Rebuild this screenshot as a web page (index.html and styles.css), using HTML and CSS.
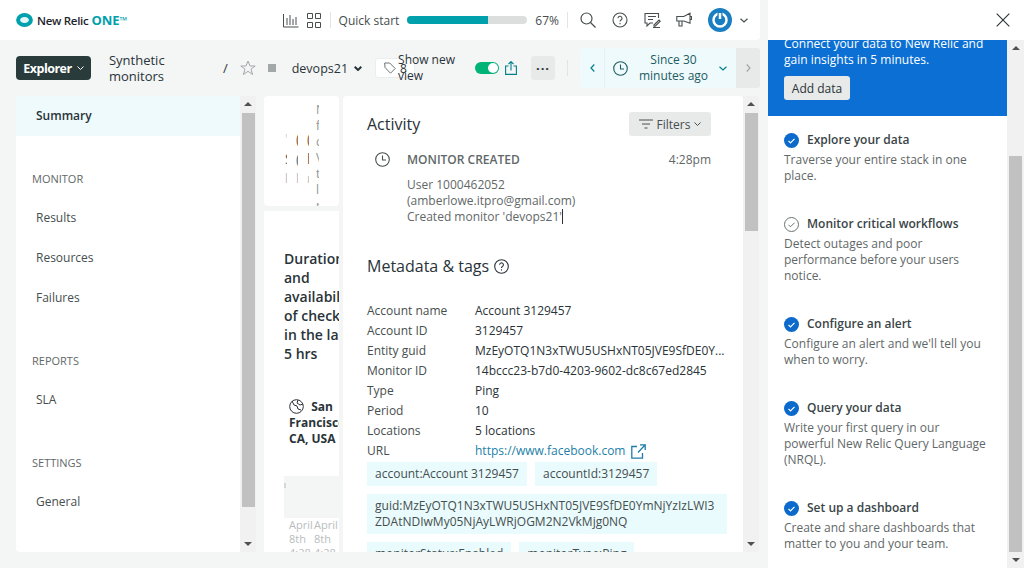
FILE: index.html
```html
<!DOCTYPE html>
<html lang="en">
<head>
  <meta charset="UTF-8" />
  <title>devops21 - New Relic One</title>
  <link rel="stylesheet" href="styles.css">
</head>
<body>
  <div class="app">
    <div class="main">
      <!-- top nav -->
      <header class="topbar">
        <div class="logo">
          <svg width="17" height="14" viewBox="0 0 17 14"><ellipse cx="8.5" cy="7" rx="6.400" ry="5" fill="#e4f6f7" stroke="#00a0ad" stroke-width="4"/></svg>
          <span class="logo-name">New Relic</span> <span class="logo-one">ONE</span><span class="logo-tm">™</span>
        </div>
        <div class="topbar-right">
          <svg class="ico" width="16" height="15" viewBox="0 0 16 15" fill="none" stroke="#464e4e"><path d="M.5 1v13h15M4 5v7M7 2v10M10 6v6M13 4v8"/></svg>
          <svg class="ico" width="16" height="15" viewBox="0 0 16 15" fill="none" stroke="#464e4e"><path d="M1.500.5h5v5h-5zM9.500.5h5v5h-5zM1.500 9.500h5v5h-5zM9.500 9.500h5v5h-5z"/></svg>
          <span class="vline"></span>
          <span class="qs">Quick start</span>
          <span class="progress"><span class="progress-fill"></span></span>
          <span class="qs pct">67%</span>
          <span class="vline"></span>
          <svg class="ico search" width="16" height="16" viewBox="0 0 16 16" fill="none" stroke="#464e4e" stroke-width="1.200"><circle cx="6.500" cy="6.500" r="5.500"/><path d="M10.500 10.500l5 5"/></svg>
          <svg class="ico" width="16" height="16" viewBox="0 0 16 16" fill="none" stroke="#464e4e" stroke-width="1.100"><circle cx="8" cy="8" r="7"/><path d="M6 6.300a2 2 0 1 1 3 1.700c-.7.400-1 .8-1 1.600M8 11v1.200"/></svg>
          <svg class="ico feedback" width="17" height="16" viewBox="0 0 17 16" fill="none" stroke="#464e4e" stroke-width="1.100"><path d="M14.500 6V1.500H1v9.500h2v3l3-3h3M4 4.500h8M4 7.500h5M10 13l5-5 1.200 1.200-5 5H10zM9 15.500h7"/></svg>
          <svg class="ico" width="16" height="16" viewBox="0 0 16 16" fill="none" stroke="#464e4e" stroke-width="1.100"><path d="M.8 4.500h7L14 1.200v10L7.800 9H.8zM3 9v5h3V9M14.500 4.500h1v3h-1"/></svg>
          <svg class="avatar" width="24" height="24" viewBox="0 0 24 24"><circle cx="12" cy="12" r="12" fill="#1a7ec2"/><circle cx="12" cy="12" r="6.500" fill="none" stroke="#fff" stroke-width="2.500"/><path d="M12 3.500v8" stroke="#1a7ec2" stroke-width="5"/><path d="M12 5v6" stroke="#fff" stroke-width="2.500"/></svg>
          <svg class="ico caret" width="8" height="5" viewBox="0 0 8 5" fill="none" stroke="#464e4e" stroke-width="1.200"><path d="M.5.700L4 4 7.500.700"/></svg>
        </div>
      </header>

      <!-- entity header -->
      <div class="subbar">
        <button class="explorer">Explorer <svg width="7" height="4" viewBox="0 0 7 4" fill="none" stroke="#fff"><path d="M.5.500L3.500 3.500 6.500.500"/></svg></button>
        <div class="crumb">Synthetic monitors</div>
        <span class="slash">/</span>
        <svg class="star" width="16" height="16" viewBox="0 0 16 16" fill="none" stroke="#a2a8a8"><path d="M8 1l2 5h5.200l-4.200 3.200 1.600 5.300L8 11.300l-4.600 3.200L5 9.200.8 6H6z"/></svg>
        <span class="status"></span>
        <span class="entity">devops21</span>
        <svg class="entity-caret" width="8" height="5" viewBox="0 0 8 5" fill="none" stroke="#293338" stroke-width="2"><path d="M.7.700L4 4 7.300.700"/></svg>
        <span class="tagbox">
          <svg width="12" height="12" viewBox="0 0 12 12" fill="none" stroke="#6b7373"><path d="M.7 1h5l5.500 5.500-4.700 4.700L1 5.500z"/></svg>
          <span class="tagcount">8</span>
          <span class="newview">Show new view</span>
        </span>
        <span class="toggle"><span class="knob"></span></span>
        <svg class="share" width="12" height="14" viewBox="0 0 12 14" fill="none" stroke="#00808c" stroke-width="1.100"><path d="M3.500 5H.6v8.400h10.800V5H8.500M6 9.500V.8M3.500 3L6 .6 8.500 3"/></svg>
        <button class="more">···</button>
        <span class="vline tall"></span>
        <div class="timepicker">
          <span class="tp-side"><svg width="5" height="8" viewBox="0 0 5 8" fill="none" stroke="#00808c" stroke-width="1.200"><path d="M4.300.500L1 4l3.300 3.500"/></svg></span>
          <span class="tp-mid">
            <svg width="15" height="15" viewBox="0 0 15 15" fill="none" stroke="#1d5c62" stroke-width="1.100"><circle cx="7.500" cy="7.500" r="6.800"/><path d="M7.500 3.500v4.500h3.500"/></svg>
            <span class="tp-text">Since 30 minutes ago</span>
            <svg width="8" height="5" viewBox="0 0 8 5" fill="none" stroke="#00808c" stroke-width="1.200"><path d="M.5.700L4 4 7.500.700"/></svg>
          </span>
          <span class="tp-next"><svg width="5" height="8" viewBox="0 0 5 8" fill="none" stroke="#a2a8a8" stroke-width="1.200"><path d="M.7.500L4 4 .7 7.500"/></svg></span>
        </div>
      </div>

      <div class="content">
        <div class="sidenav-wrap">
          <nav class="sidenav">
            <a class="nav-item active">Summary</a>
            <div class="nav-head">MONITOR</div>
            <a class="nav-item">Results</a>
            <a class="nav-item">Resources</a>
            <a class="nav-item">Failures</a>
            <div class="nav-head">REPORTS</div>
            <a class="nav-item">SLA</a>
            <div class="nav-head">SETTINGS</div>
            <a class="nav-item">General</a>
          </nav>
          <div class="scrollbar"><span class="arrow up"></span><span class="thumb thumb-nav"></span><span class="arrow down"></span></div>
        </div>

        <div class="middle">
          <div class="mini-card">
            <div class="slit">
              <p class="faint">'</p>
              <p class="dark">S</p>
              <p class="pale">l</p>
            </div>
            <div class="slit">
              <p>(</p>
              <p class="blue">(</p>
              <p class="pale">l</p>
            </div>
            <div class="slit">
              <p>(</p>
              <p class="dark">l</p>
              <p class="pale">r</p>
            </div>
            <div class="slit-text">'<br>N<br>f<br>c<br>V<br>t<br>l<br>r</div>
          </div>
          <div class="chart-card">
            <h3>Duration and availability of checks in the last 5 hrs</h3>
            <div class="loc">
              <svg width="15" height="15" viewBox="0 0 15 15" fill="none" stroke="#293338"><circle cx="7.500" cy="7.500" r="6.800"/><path d="M3 2l2 4 3 1 1 3 3 1M9 1l-1 3 3 2 3-1"/></svg>
              <b>San Francisco, CA, USA</b>
            </div>
            <div class="chart-bar"></div>
            <div class="chart-dates"><span>April 8th 4:28</span><span>April 8th 4:28</span></div>
          </div>
        </div>

        <div class="detail-wrap">
          <section class="detail">
            <div class="activity-head">
              <h2>Activity</h2>
              <button class="filters">
                <svg width="14" height="10" viewBox="0 0 14 10" fill="none" stroke="#464e4e"><path d="M0 1h14M3 5h8M5.500 9h3"/></svg>
                Filters
                <svg width="7" height="4" viewBox="0 0 7 4" fill="none" stroke="#464e4e"><path d="M.5.500l3 3 3-3"/></svg>
              </button>
            </div>
            <div class="event">
              <svg width="15" height="15" viewBox="0 0 15 15" fill="none" stroke="#464e4e" stroke-width="1.100"><circle cx="7.500" cy="7.500" r="6.800"/><path d="M7.500 3.500v4.500h3.500"/></svg>
              <div class="event-body">
                <div class="event-top"><b>MONITOR CREATED</b><span>4:28pm</span></div>
                <p>User 1000462052 (amberlowe.itpro@gmail.com)<br>Created monitor 'devops21'<span class="caret-line"></span></p>
              </div>
            </div>
            <h2 class="meta-title">Metadata &amp; tags
              <svg width="15" height="15" viewBox="0 0 15 15" fill="none" stroke="#293338" stroke-width="1.100"><circle cx="7.500" cy="7.500" r="6.800"/><path d="M5.600 5.800a1.900 1.900 0 1 1 2.900 1.600c-.7.400-1 .7-1 1.500M7.500 10.300v1.100"/></svg>
            </h2>
            <dl class="meta">
              <dt>Account name</dt><dd>Account 3129457</dd>
              <dt>Account ID</dt><dd>3129457</dd>
              <dt>Entity guid</dt><dd>MzEyOTQ1N3xTWU5USHxNT05JVE9SfDE0Y...</dd>
              <dt>Monitor ID</dt><dd>14bccc23-b7d0-4203-9602-dc8c67ed2845</dd>
              <dt>Type</dt><dd>Ping</dd>
              <dt>Period</dt><dd>10</dd>
              <dt>Locations</dt><dd>5 locations</dd>
              <dt>URL</dt><dd><a>https://www.facebook.com</a>
                <svg width="15" height="15" viewBox="0 0 15 15" fill="none" stroke="#1d7fa8" stroke-width="1.300"><path d="M6 2.500H.8v11.700h10.700V9M7 8.500L14 1M9 .8h5.200V6"/></svg></dd>
            </dl>
            <div class="tags">
              <span class="tag">account:Account 3129457</span>
              <span class="tag">accountId:3129457</span>
              <span class="tag wide">guid:MzEyOTQ1N3xTWU5USHxNT05JVE9SfDE0YmNjYzIzLWI3ZDAtNDIwMy05NjAyLWRjOGM2N2VkMjg0NQ</span>
              <span class="tag">monitorStatus:Enabled</span>
              <span class="tag">monitorType:Ping</span>
            </div>
          </section>
          <div class="scrollbar"><span class="arrow up"></span><span class="thumb thumb-detail"></span><span class="arrow down"></span></div>
        </div>
      </div>
    </div>

    <!-- quick start panel -->
    <aside class="panel">
      <div class="panel-top">
        <svg width="14" height="14" viewBox="0 0 14 14" fill="none" stroke="#293338" stroke-width="1.100"><path d="M.7.700l12.600 12.600M13.300.700L.7 13.300"/></svg>
      </div>
      <div class="panel-scroll">
        <div class="panel-body">
          <div class="banner">
            <p>Connect your data to New Relic and gain insights in 5 minutes.</p>
            <button class="add-data">Add data</button>
          </div>
          <div class="step">
            <h4><svg class="check" width="15" height="15" viewBox="0 0 15 15"><circle cx="7.500" cy="7.500" r="7.500" fill="#0b6acb"/><path d="M4.500 7.800l2 2 4-4" fill="none" stroke="#fff" stroke-width="1.200"/></svg>Explore your data</h4>
            <p>Traverse your entire stack in one place.</p>
          </div>
          <div class="step">
            <h4><svg class="check" width="15" height="15" viewBox="0 0 15 15" fill="none" stroke="#6b7373"><circle cx="7.500" cy="7.500" r="7"/><path d="M4.500 7.800l2 2 4-4"/></svg>Monitor critical workflows</h4>
            <p>Detect outages and poor performance before your users notice.</p>
          </div>
          <div class="step">
            <h4><svg class="check" width="15" height="15" viewBox="0 0 15 15"><circle cx="7.500" cy="7.500" r="7.500" fill="#0b6acb"/><path d="M4.500 7.800l2 2 4-4" fill="none" stroke="#fff" stroke-width="1.200"/></svg>Configure an alert</h4>
            <p>Configure an alert and we'll tell you when to worry.</p>
          </div>
          <div class="step">
            <h4><svg class="check" width="15" height="15" viewBox="0 0 15 15"><circle cx="7.500" cy="7.500" r="7.500" fill="#0b6acb"/><path d="M4.500 7.800l2 2 4-4" fill="none" stroke="#fff" stroke-width="1.200"/></svg>Query your data</h4>
            <p>Write your first query in our powerful New Relic Query Language (NRQL).</p>
          </div>
          <div class="step">
            <h4><svg class="check" width="15" height="15" viewBox="0 0 15 15"><circle cx="7.500" cy="7.500" r="7.500" fill="#0b6acb"/><path d="M4.500 7.800l2 2 4-4" fill="none" stroke="#fff" stroke-width="1.200"/></svg>Set up a dashboard</h4>
            <p>Create and share dashboards that matter to you and your team.</p>
          </div>
        </div>
        <div class="scrollbar light"><span class="arrow up"></span><span class="thumb thumb-panel"></span><span class="arrow down"></span></div>
      </div>
    </aside>
  </div>
</body>
</html>
```

FILE: styles.css
```css
* {
  box-sizing: border-box;
}
html, body {
  height: 100%;
}
body {
  margin: 0;
  overflow: hidden;
  background: #f4f5f5;
  color: #293338;
  font-family: "Open Sans", sans-serif;
  font-size: 12px;
}
h2, h3, h4, p, dl, dd {
  margin: 0;
}
button {
  font-family: inherit;
  border: none;
}
svg {
  flex: none;
}
.app {
  display: flex;
  justify-content: space-between;
  height: 568px;
}
.main {
  width: 760px;
  display: flex;
  flex-direction: column;
}

/* top nav */
.topbar {
  height: 40px;
  flex: none;
  background: #fff;
  border-bottom-right-radius: 4px;
  display: flex;
  align-items: center;
  justify-content: space-between;
  padding: 0 12px 0 16px;
}
.logo {
  display: flex;
  align-items: center;
  font-size: 11.5px;
  font-weight: 600;
  color: #1d252c;
  letter-spacing: -0.3px;
}
.logo svg {
  margin-right: 4px;
}
.logo-one {
  color: #00a0ad;
  font-size: 13px;
  font-weight: 700;
  margin-left: 3px;
  letter-spacing: 0;
}
.logo-tm {
  color: #00a0ad;
  font-size: 10px;
}
.topbar-right {
  display: flex;
  align-items: center;
}
.ico {
  margin-right: 7px;
}
.ico + .ico {
  margin-right: 8px;
}
.vline {
  width: 1px;
  height: 16px;
  background: #e3e4e4;
}
.qs {
  font-size: 12px;
  color: #464e4e;
  margin-left: 8px;
}
.progress {
  width: 120px;
  height: 8px;
  border-radius: 4px;
  background: #dcdede;
  margin-left: 8px;
  overflow: hidden;
}
.progress-fill {
  display: block;
  width: 81px;
  height: 8px;
  background: #00a0ad;
}
.pct {
  margin-left: 8px;
  margin-right: 8px;
}
.topbar-right .search {
  margin-left: 12px;
  margin-right: 16px;
}
.topbar-right .ico:nth-of-type(n+4) {
  margin-right: 16px;
}
.topbar-right .ico.feedback {
  margin-right: 15px;
}
.avatar {
  margin-right: 8px;
}
.topbar-right .ico.caret {
  margin-right: 0;
}

/* entity header */
.subbar {
  height: 56px;
  flex: none;
  display: flex;
  align-items: center;
  padding-left: 16px;
  font-size: 13px;
  color: #293338;
}
.explorer {
  width: 75px;
  height: 24px;
  background: #293b3b;
  color: #fff;
  border-radius: 4px;
  font-size: 12.5px;
  font-weight: 700;
  letter-spacing: -0.5px;
  display: flex;
  align-items: center;
  justify-content: center;
  gap: 5px;
  padding: 0;
}
.crumb {
  width: 70px;
  margin-left: 18px;
  margin-top: -1px;
  line-height: 16px;
}
.slash {
  margin-left: 44px;
}
.star {
  margin-left: 12px;
}
.status {
  width: 8px;
  height: 8px;
  background: #a2a8a8;
  margin-left: 12px;
}
.entity {
  margin-left: 16px;
  font-size: 12.5px;
  white-space: nowrap;
}
.entity-caret {
  margin-left: 6px;
}
.tagbox {
  position: relative;
  width: 40px;
  height: 20px;
  margin-left: 13px;
  background: #fff;
  border: 1px solid #eceeee;
  border-radius: 3px;
  display: flex;
  align-items: center;
  padding-left: 8px;
}
.tagcount {
  font-size: 12px;
  margin-left: 4px;
}
.newview {
  position: absolute;
  left: 22px;
  top: -7px;
  width: 70px;
  line-height: 16px;
  font-size: 12px;
}
.toggle {
  width: 24px;
  height: 12px;
  margin-left: 60px;
  border-radius: 6px;
  background: #00b377;
  display: flex;
  align-items: center;
  justify-content: flex-end;
  padding-right: 1px;
}
.knob {
  width: 10px;
  height: 10px;
  border-radius: 50%;
  background: #fff;
}
.share {
  margin-left: 6px;
}
.more {
  width: 24px;
  height: 24px;
  margin-left: 14px;
  background: #e8e9e9;
  border-radius: 3px;
  color: #293338;
  font-size: 13px;
  font-weight: 700;
  letter-spacing: 1px;
  padding: 0;
}
.vline.tall {
  height: 16px;
  margin-left: 12px;
}
.timepicker {
  width: 180px;
  height: 40px;
  margin-left: 12px;
  display: flex;
  border-radius: 3px;
  overflow: hidden;
  background: #eefafc;
  flex: none;
}
.tp-side {
  width: 25px;
  border-right: 1px solid #e3f1f3;
  display: flex;
  align-items: center;
  justify-content: center;
}
.tp-mid {
  flex: 1;
  display: flex;
  align-items: center;
  padding: 0 9px 0 8px;
}
.tp-text {
  flex: 1;
  text-align: center;
  font-size: 12px;
  line-height: 16px;
  color: #1d5c62;
}
.tp-next {
  width: 24px;
  background: #e8e9e9;
  display: flex;
  align-items: center;
  justify-content: center;
}

/* content columns */
.content {
  flex: 1;
  height: 456px;
  display: flex;
  padding-left: 16px;
  margin-bottom: 16px;
  overflow: hidden;
}
.sidenav-wrap {
  width: 240px;
  display: flex;
  flex: none;
}
.sidenav {
  width: 224px;
  background: #fff;
  border-radius: 4px 0 0 4px;
  overflow: hidden;
  font-size: 12px;
}
.nav-item {
  display: flex;
  align-items: center;
  height: 40px;
  padding: 0 0 2px 20px;
  color: #464e4e;
}
.nav-item.active {
  background: #eefafc;
  color: #293338;
  font-weight: 600;
}
.nav-head {
  font-size: 11px;
  color: #5f6868;
  padding-left: 16px;
  margin-top: 35px;
  margin-bottom: 11px;
  line-height: 16px;
}
.scrollbar {
  width: 16px;
  flex: none;
  background: #f1f1f1;
  display: flex;
  flex-direction: column;
  align-items: center;
  position: relative;
}
.arrow {
  flex: none;
  width: 0;
  height: 0;
  border: 4px solid transparent;
}
.arrow.up {
  border-bottom-color: #505050;
  margin-top: 2px;
}
.arrow.down {
  border-top-color: #505050;
  position: absolute;
  bottom: 2px;
}
.thumb {
  width: 13px;
  background: #c1c1c1;
  margin-top: 7px;
}
.thumb-nav {
  height: 394px;
}
.thumb-detail {
  height: 118px;
}
.thumb-panel {
  height: 396px;
  margin-top: 106px;
}

.middle {
  width: 75px;
  margin-left: 8px;
  flex: none;
  display: flex;
  flex-direction: column;
  gap: 5px;
  overflow: hidden;
}
.mini-card {
  height: 110px;
  flex: none;
  background: #fff;
  border-radius: 4px;
  display: flex;
  padding-left: 21px;
  gap: 8px;
  overflow: hidden;
  font-size: 12px;
  line-height: 16px;
  color: #8e9494;
}
.slit {
  width: 2px;
  flex: none;
  margin-right: 1px;
  padding-top: 33px;
  overflow: hidden;
  color: #7d5b3c;
}
.slit p {
  height: 20px;
  line-height: 20px;
  font-size: 14px;
}
.slit .faint {
  color: #d8d4cc;
}
.slit .dark {
  color: #4f5a5e;
}
.slit .blue {
  color: #4a6f8c;
}
.slit .pale {
  font-size: 12px;
  color: #b4bcc4;
}
.slit-text {
  width: 3px;
  flex: none;
  margin-left: -2px;
  margin-top: -10px;
  overflow: hidden;
}
.chart-card {
  flex: 1;
  background: #fff;
  padding: 38px 0 0 20px;
  overflow: hidden;
}
.chart-card h3 {
  width: 75px;
  font-size: 14px;
  font-weight: 600;
  line-height: 19px;
  color: #293338;
}
.loc {
  width: 75px;
  margin: 36px 0 0 5px;
  font-size: 12px;
  line-height: 16px;
  white-space: normal;
}
.loc svg {
  vertical-align: -3px;
  margin-right: 4px;
}
.chart-bar {
  height: 42px;
  margin-top: 29px;
  padding-top: 7px;
  background: #f4f5f5;
}
.chart-bar::before {
  content: "";
  display: block;
  width: 2px;
  height: 5px;
  background: #d6d8d8;
}
.chart-dates {
  display: flex;
  padding-left: 5px;
  font-size: 11px;
  line-height: 14px;
  color: #b9bdbd;
}
.chart-dates span {
  width: 25px;
  flex: none;
}

.detail-wrap {
  flex: none;
  width: 416px;
  margin-left: 4px;
  display: flex;
}
.detail {
  width: 400px;
  background: #fff;
  padding: 14px 16px 0 24px;
  overflow: hidden;
  border-radius: 4px 4px 0 0;
}
.activity-head {
  display: flex;
  justify-content: space-between;
  align-items: center;
  height: 28px;
  margin-right: 16px;
}
h2 {
  font-size: 16px;
  font-weight: 400;
  color: #293338;
}
.filters {
  height: 24px;
  width: 82px;
  background: #e8e9e9;
  border-radius: 3px;
  font-size: 12px;
  color: #464e4e;
  display: flex;
  align-items: center;
  justify-content: center;
  gap: 4px;
  padding: 0;
}
.event {
  display: flex;
  margin: 14px 16px 0 0;
  padding-left: 8px;
  gap: 17px;
}
.event-body {
  flex: 1;
  color: #5f6868;
}
.event-top {
  display: flex;
  justify-content: space-between;
  line-height: 16px;
}
.event-top b {
  font-weight: 600;
}
.event p {
  width: 185px;
  margin-top: 9px;
  line-height: 16px;
}
.caret-line {
  display: inline-block;
  width: 1px;
  height: 15px;
  background: #293338;
  vertical-align: -3px;
}
.meta-title {
  margin-top: 30px;
  display: flex;
  align-items: center;
  gap: 5px;
  line-height: 22px;
}
.meta {
  display: grid;
  grid-template-columns: 108px 1fr;
  grid-auto-rows: 20px;
  margin-top: 24px;
  line-height: 20px;
}
.meta dt {
  color: #464e4e;
}
.meta dd {
  white-space: nowrap;
  color: #293338;
}
.meta a {
  color: #1d7fa8;
}
.meta svg {
  vertical-align: -4px;
  margin-left: 2px;
}
.tags {
  display: flex;
  flex-wrap: wrap;
  gap: 8px;
  margin-top: 1px;
  color: #464e4e;
}
.tag {
  background: #e9fbfd;
  padding: 4px 8px;
  line-height: 16px;
  word-break: break-all;
}
.tag.wide {
  width: 360px;
}

/* quick start panel */
.panel {
  width: 256px;
  height: 568px;
  background: #fff;
  display: flex;
  flex-direction: column;
}
.panel-top {
  height: 40px;
  flex: none;
  display: flex;
  align-items: center;
  justify-content: flex-end;
  padding-right: 14px;
}
.panel-scroll {
  flex: 1;
  display: flex;
  overflow: hidden;
}
.panel-body {
  width: 239px;
  flex: none;
  font-size: 12px;
}
.banner {
  height: 76px;
  background: #0b6fd3;
  color: #fff;
  padding: 0 16px;
  overflow: hidden;
}
.banner p {
  margin-top: -4px;
  font-size: 12px;
  line-height: 16px;
}
.add-data {
  display: block;
  margin-top: 8px;
  width: 66px;
  height: 24px;
  background: #e8e9e9;
  border-radius: 3px;
  color: #293338;
  font-size: 12px;
  padding: 0;
}
.step {
  padding: 16px 16px 0;
  margin-bottom: 16px;
}
.step h4 {
  display: flex;
  align-items: center;
  font-size: 12px;
  font-weight: 600;
  line-height: 16px;
  color: #3a4548;
}
.check {
  margin-right: 8px;
}
.step p {
  margin-top: 4px;
  line-height: 16px;
  color: #5f6868;
}
.scrollbar.light {
  width: 17px;
}
```
